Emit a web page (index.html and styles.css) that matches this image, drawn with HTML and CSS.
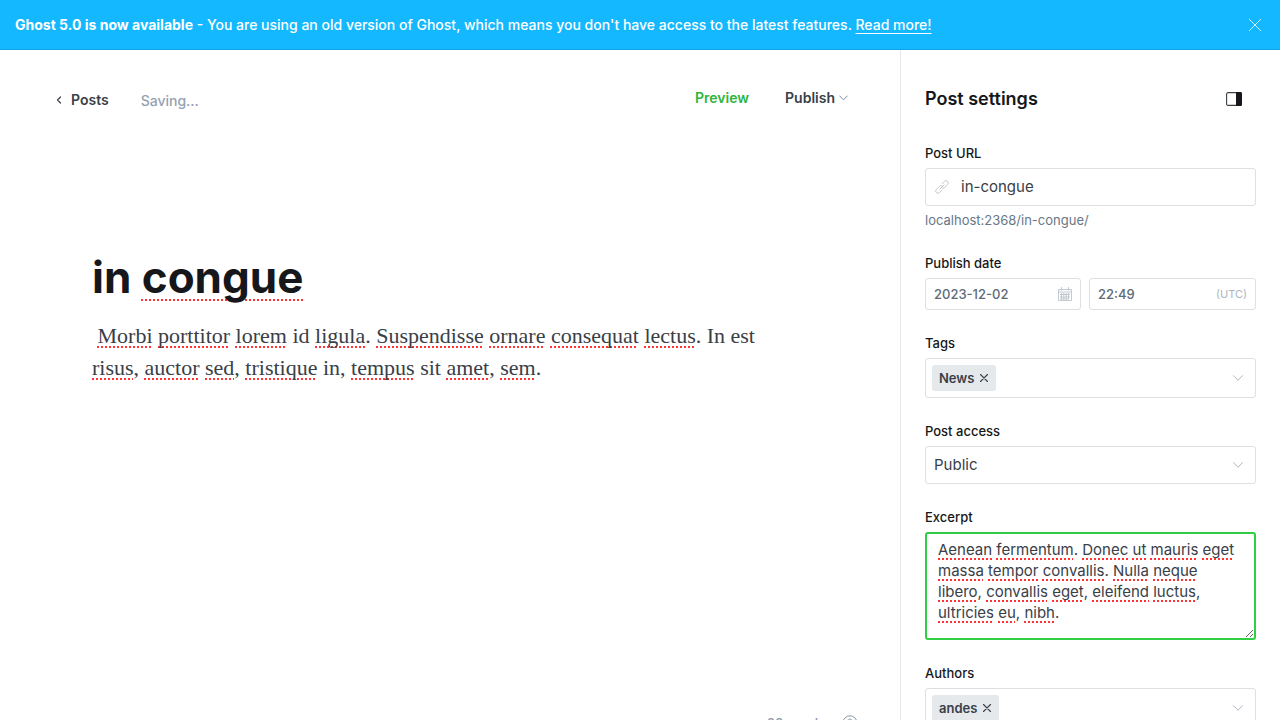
FILE: index.html
```html
<!DOCTYPE html>
<html lang="en">
<head>
<meta charset="utf-8">
<meta name="viewport" content="width=device-width, initial-scale=1">
<title>in congue - Ghost editor</title>
<link rel="stylesheet" href="styles.css">
</head>
<body>
<div class="banner" role="status">
  <p class="banner-text"><strong>Ghost 5.0 is now available</strong> - You are using an old version of Ghost, which means you don't have access to the latest features. <a class="banner-link" href="#">Read more!</a></p>
  <button class="icon-button banner-close" type="button" aria-label="Close notification">
    <svg width="12" height="12" viewBox="0 0 12 12" fill="none" stroke="currentColor" stroke-width=".8"><path d="M0 0l12 12M12 0L0 12"/></svg>
  </button>
</div>
<div class="app">
  <main class="editor">
    <header class="editor-header">
      <a class="back-link" href="#">
        <svg width="6" height="8" viewBox="0 0 6 8" fill="none" stroke="currentColor" stroke-width="1.2" stroke-linecap="round" stroke-linejoin="round"><path d="M4.5 1L1.5 4l3 3"/></svg>
        Posts
      </a>
      <span class="save-status">Saving...</span>
      <div class="header-actions">
        <button class="text-button preview" type="button">Preview</button>
        <button class="text-button publish" type="button">Publish
          <svg class="chevron" width="9" height="6" viewBox="0 0 9 6" fill="none" stroke="currentColor" stroke-linecap="round" stroke-linejoin="round"><path d="M.8 1l3.7 3.8L8.2 1"/></svg>
        </button>
      </div>
    </header>
    <article class="document">
      <h1 class="document-title">in <span class="misspelt">congue</span></h1>
      <p class="document-body">&nbsp;<span class="misspelt">Morbi</span> <span class="misspelt">porttitor</span> <span class="misspelt">lorem</span> id <span class="misspelt">ligula</span>. <span class="misspelt">Suspendisse</span> <span class="misspelt">ornare</span> <span class="misspelt">consequat</span> <span class="misspelt">lectus</span>. In est <span class="misspelt">risus</span>, <span class="misspelt">auctor</span> <span class="misspelt">sed</span>, <span class="misspelt">tristique</span> in, <span class="misspelt">tempus</span> sit <span class="misspelt">amet</span>, <span class="misspelt">sem</span>.</p>
    </article>
    <footer class="editor-footer">
      <span>20 words</span>
      <a class="help-link" href="#" aria-label="Help">
        <svg width="16" height="16" viewBox="0 0 16 16" fill="none" stroke="currentColor" stroke-linecap="round"><circle cx="8" cy="8" r="7.2"/><path d="M5.8 6.2a2.2 2.2 0 1 1 3.2 2c-.7.4-1 .8-1 1.5M8 11.7v.1"/></svg>
      </a>
    </footer>
  </main>
  <aside class="settings">
    <div class="settings-header">
      <h2 class="settings-title">Post settings</h2>
      <button class="icon-button" type="button" aria-label="Toggle settings">
        <svg width="16" height="14" viewBox="0 0 16 14"><rect x=".6" y=".6" width="14.8" height="12.8" rx="1.5" fill="none" stroke="#394047" stroke-width="1.1"/><path d="M10 0h4.5A1.5 1.5 0 0 1 16 1.5v11a1.5 1.5 0 0 1-1.5 1.5H10z" fill="#15171a"/></svg>
      </button>
    </div>
    <form class="settings-form">
      <div class="field">
        <label class="label" for="url">Post URL</label>
        <div class="control large">
          <svg class="link-icon" width="14" height="14" viewBox="0 0 14 14" fill="none" stroke="currentColor" stroke-linecap="round"><g transform="rotate(-45 7 7)"><path d="M4.5 9.2H1.2a2.2 2.2 0 0 1 0-4.4h4.6A2.2 2.2 0 0 1 8 7M4 7h6"/><path d="M9.5 4.8h3.3a2.2 2.2 0 0 1 0 4.4H8.2A2.2 2.2 0 0 1 6 7"/></g></svg>
          <input class="input" id="url" type="text" value="in-congue">
        </div>
        <p class="hint">localhost:2368/in-congue/</p>
      </div>
      <div class="field">
        <label class="label" for="date">Publish date</label>
        <div class="date-row">
          <div class="control small">
            <input class="input" id="date" type="text" value="2023-12-02">
            <svg class="calendar-icon" width="14" height="14" viewBox="0 0 14 14" fill="none" stroke="currentColor"><path d="M.5 2.5h13v11H.5zM.5 5h13M3.5 0v3.5M10.5 0v3.5M3.5 6v6.5M5.8 6v6.5M8.2 6v6.5M10.5 6v6.5M2 7.5h10M2 10h10M2 12h8" stroke-width=".8"/></svg>
          </div>
          <div class="control small">
            <input class="input" type="text" value="22:49" aria-label="Publish time">
            <span class="timezone">(UTC)</span>
          </div>
        </div>
      </div>
      <div class="field">
        <label class="label" for="tags">Tags</label>
        <div class="control tokens">
          <span class="token">News <button class="icon-button" type="button" aria-label="Remove News"><svg width="8" height="8" viewBox="0 0 8 8" fill="none" stroke="currentColor" stroke-width="1.1" stroke-linecap="round"><path d="M.5.5l7 7M7.5.5l-7 7"/></svg></button></span>
          <input class="input" id="tags" type="text">
          <svg class="chevron" width="10" height="6" viewBox="0 0 10 6" fill="none" stroke="currentColor" stroke-linecap="round" stroke-linejoin="round"><path d="M.6.7L5 5.3 9.4.7"/></svg>
        </div>
      </div>
      <div class="field">
        <label class="label" for="access">Post access</label>
        <div class="control large">
          <select class="input" id="access"><option>Public</option><option>Members only</option><option>Paid-members only</option></select>
          <svg class="chevron" width="10" height="6" viewBox="0 0 10 6" fill="none" stroke="currentColor" stroke-linecap="round" stroke-linejoin="round"><path d="M.6.7L5 5.3 9.4.7"/></svg>
        </div>
      </div>
      <div class="field">
        <label class="label" for="excerpt">Excerpt</label>
        <div class="excerpt">
          <div class="excerpt-text excerpt-marks" aria-hidden="true"><span class="misspelt">Aenean</span> <span class="misspelt">fermentum</span>. <span class="misspelt">Donec</span> <span class="misspelt">ut</span> <span class="misspelt">mauris</span> <span class="misspelt">eget</span> <span class="misspelt">massa</span> <span class="misspelt">tempor</span> <span class="misspelt">convallis</span>. <span class="misspelt">Nulla</span> <span class="misspelt">neque</span> <span class="misspelt">libero</span>, <span class="misspelt">convallis</span> <span class="misspelt">eget</span>, <span class="misspelt">eleifend</span> <span class="misspelt">luctus</span>, <span class="misspelt">ultricies</span> <span class="misspelt">eu</span>, <span class="misspelt">nibh</span>.</div>
          <textarea class="excerpt-text excerpt-input" id="excerpt" spellcheck="false">Aenean fermentum. Donec ut mauris eget massa tempor convallis. Nulla neque libero, convallis eget, eleifend luctus, ultricies eu, nibh.</textarea>
        </div>
      </div>
      <div class="field">
        <label class="label" for="authors">Authors</label>
        <div class="control tokens">
          <span class="token">andes <button class="icon-button" type="button" aria-label="Remove andes"><svg width="8" height="8" viewBox="0 0 8 8" fill="none" stroke="currentColor" stroke-width="1.1" stroke-linecap="round"><path d="M.5.5l7 7M7.5.5l-7 7"/></svg></button></span>
          <input class="input" id="authors" type="text">
          <svg class="chevron" width="10" height="6" viewBox="0 0 10 6" fill="none" stroke="currentColor" stroke-linecap="round" stroke-linejoin="round"><path d="M.6.7L5 5.3 9.4.7"/></svg>
        </div>
      </div>
    </form>
  </aside>
</div>
</body>
</html>
```
FILE: styles.css
```css
*, *::before, *::after { box-sizing: border-box; }

body {
  margin: 0;
  height: 100vh;
  overflow: hidden;
  background: #fff;
  color: #394047;
  font: 14px/20px Inter, "Liberation Sans", sans-serif;
}

h1, h2, p { margin: 0; }
button, input, select, textarea { font: inherit; color: inherit; }
svg { display: block; flex: none; overflow: visible; }

.icon-button, .text-button {
  padding: 0;
  border: 0;
  background: none;
  cursor: pointer;
}

.misspelt {
  text-decoration: underline dotted #f33 2px;
  text-decoration-skip-ink: none;
  text-underline-offset: 3px;
}

/* Upgrade banner */
.banner {
  display: flex;
  align-items: center;
  justify-content: space-between;
  min-height: 50px;
  padding: 0 19px 0 15px;
  border-bottom: 1px solid #0fa3e6;
  background: #14b8ff;
  color: #fff;
  font-weight: 500;
}
.banner-link {
  color: inherit;
  text-decoration: underline 1px;
  text-decoration-skip-ink: none;
  text-underline-offset: 3px;
}

/* Application frame */
.app {
  display: grid;
  grid-template-columns: minmax(0, 1fr) 380px;
  height: 100vh;
}

/* Editor */
.editor {
  display: flex;
  flex-direction: column;
}
.editor-header {
  display: flex;
  align-items: flex-start;
  padding: 38px 52px 0 56px;
  font-weight: 600;
}
.back-link {
  display: flex;
  align-items: center;
  gap: 9px;
  margin-top: 2px;
  color: inherit;
  text-decoration: none;
}
.save-status {
  margin: 3px 0 0 32px;
  color: #95a1b1;
  font-weight: 500;
}
.header-actions {
  display: flex;
  gap: 36px;
  margin-left: auto;
}
.text-button {
  display: flex;
  align-items: center;
  gap: 4px;
}
.preview { color: #30b43c; }
.publish .chevron { color: #7c8b9a; }

.document { padding: 137px 100px 0 92px; }
.document-title {
  color: #15171a;
  font-size: 44px;
  line-height: 58px;
  font-weight: 700;
}
.document-title .misspelt { text-underline-offset: 6px; }
.document-body {
  margin-top: 14px;
  font: 22px/32px "Liberation Serif", serif;
}
.editor-footer {
  display: flex;
  align-items: center;
  justify-content: flex-end;
  gap: 17px;
  margin-top: auto;
  padding: 0 42px 37px;
  color: #8a99a8;
  font-size: 13px;
  font-weight: 500;
}
.help-link { color: inherit; }

/* Settings panel */
.settings {
  padding: 36px 24px 0;
  border-left: 1px solid #e5e9ed;
}
.settings-header {
  display: flex;
  align-items: center;
  justify-content: space-between;
  padding-right: 14px;
}
.settings-title {
  color: #15171a;
  font-size: 18px;
  line-height: 26px;
  font-weight: 600;
}
.settings-form {
  display: grid;
  gap: 23px;
  margin-top: 31px;
}
.label {
  display: block;
  margin-bottom: 5px;
  color: #15171a;
  font-size: 13px;
  font-weight: 500;
}
.control {
  display: flex;
  align-items: center;
  padding: 0 8px;
  border: 1px solid #dddfe2;
  border-radius: 3px;
}
.input {
  flex: 1;
  width: 0;
  min-width: 0;
  padding: 0;
  border: 0;
  outline: 0;
  background: none;
  appearance: none;
}
.large {
  min-height: 38px;
  font-size: 15px;
}
.small {
  min-height: 32px;
  color: #5d6b79;
  font-size: 13px;
  font-weight: 500;
}
.tokens { min-height: 40px; padding-left: 6px; }
.control > .chevron { margin-right: 4px; color: #aeb7c1; }
.link-icon { margin: 0 12px 0 1px; color: #b9bdc2; stroke-width: .8px; }
.calendar-icon { color: #b5bdc6; }
.timezone {
  color: #aeb7c1;
  font-size: 11px;
  font-weight: 400;
}
.hint {
  margin-top: 4px;
  color: #687787;
  font-size: 13px;
}
.date-row {
  display: grid;
  grid-template-columns: 156fr 167fr;
  gap: 8px;
}
.token {
  display: flex;
  align-items: center;
  gap: 6px;
  height: 26px;
  padding: 0 8px 0 7px;
  border-radius: 3px;
  background: #e5e9ec;
  font-size: 13px;
  font-weight: 600;
}
.excerpt {
  display: grid;
  border: 2px solid #30cf43;
  border-radius: 3px;
}
.excerpt-text {
  grid-area: 1 / 1;
  width: 100%;
  height: 104px;
  margin: 0;
  padding: 5px 11px;
  border: 0;
  outline: 0;
  background: none;
  font-size: 15px;
  line-height: 21px;
  white-space: pre-wrap;
  overflow: hidden;
  resize: vertical;
}
.excerpt-marks { color: transparent; resize: none; }
```
